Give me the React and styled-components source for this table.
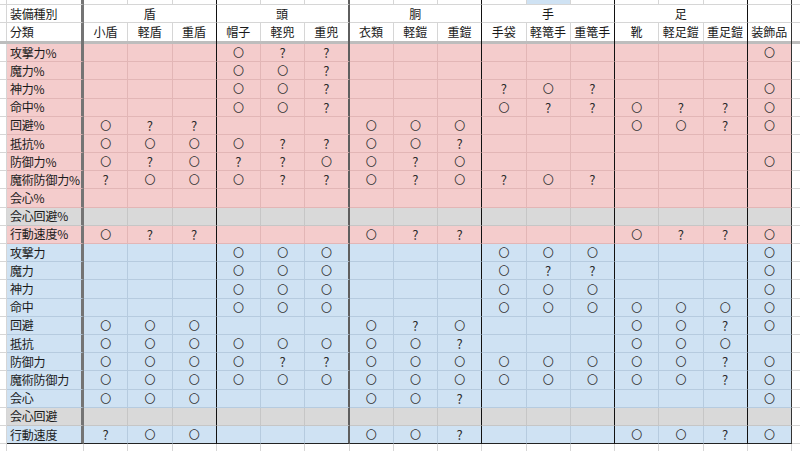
import React from "react";
import styled, { createGlobalStyle } from "styled-components";

const GlobalStyle = createGlobalStyle`
  html, body {
    margin: 0;
    padding: 0;
    background: #ffffff;
  }
  body {
    font-family: "Noto Sans CJK JP", "Noto Sans", sans-serif;
    color: #1a1a1a;
  }
`;

const COLS = [
  "小盾", "軽盾", "重盾",
  "帽子", "軽兜", "重兜",
  "衣類", "軽鎧", "重鎧",
  "手袋", "軽篭手", "重篭手",
  "靴", "軽足鎧", "重足鎧",
  "装飾品",
];

const GROUPS = [
  { name: "盾", span: 3, end: 2 },
  { name: "頭", span: 3, end: 5 },
  { name: "胴", span: 3, end: 8 },
  { name: "手", span: 3, end: 11 },
  { name: "足", span: 3, end: 14 },
  { name: "", span: 1, end: 15 },
];

// o = 〇, ? = ?, . = empty
const ROWS = [
  { label: "攻撃力%", tone: "pink", marks: "...o??.........o" },
  { label: "魔力%", tone: "pink", marks: "...oo?.........." },
  { label: "神力%", tone: "pink", marks: "...oo?...?o?...o" },
  { label: "命中%", tone: "pink", marks: "...oo?...o??o??o" },
  { label: "回避%", tone: "pink", marks: "o??...ooo...oo?o" },
  { label: "抵抗%", tone: "pink", marks: "oooo??oo?......." },
  { label: "防御力%", tone: "pink", marks: "o?o??oo?o......o" },
  { label: "魔術防御力%", tone: "pink", marks: "?ooo??o?o?o?...." },
  { label: "会心%", tone: "pink", marks: "................" },
  { label: "会心回避%", tone: "gray", marks: "................" },
  { label: "行動速度%", tone: "pink", marks: "o??...o??...o??o" },
  { label: "攻撃力", tone: "blue", marks: "...ooo...ooo...o" },
  { label: "魔力", tone: "blue", marks: "...ooo...o??...o" },
  { label: "神力", tone: "blue", marks: "...ooo...ooo...o" },
  { label: "命中", tone: "blue", marks: "...ooo...ooooooo" },
  { label: "回避", tone: "blue", marks: "ooo...o?o...oo?o" },
  { label: "抵抗", tone: "blue", marks: "oooooooo?...ooo." },
  { label: "防御力", tone: "blue", marks: "oooo??oooooooo?o" },
  { label: "魔術防御力", tone: "blue", marks: "oooooooooooooo?o" },
  { label: "会心", tone: "blue", marks: "ooo...oo?......o" },
  { label: "会心回避", tone: "gray", marks: "................" },
  { label: "行動速度", tone: "blue", marks: "?oo...oo?...oo?o" },
];

const TONES = {
  white: { bg: "#ffffff", line: "#d6d6d6" },
  pink: { bg: "#f4cccc", line: "#e2b6b6" },
  blue: { bg: "#cfe2f3", line: "#b6cbdf" },
  gray: { bg: "#d9d9d9", line: "#c6c6c6" },
};

const edgeFor = (i, line) => {
  if (i === 5) return "2px solid #5e5e5e";
  if (i === 2 || i === 8 || i === 11 || i === 14) return "1px solid #111";
  if (i === 15) return "1px solid #333";
  return `1px solid ${line}`;
};

const Sheet = styled.div`
  display: grid;
  width: 800px;
  height: 451px;
  overflow: hidden;
  grid-template-columns: 7px 77px repeat(16, 44.25px) 1fr;
  grid-template-rows: 5px 18.2px 18.2px 2.6px repeat(22, 18.2px) 1fr;
`;

const Cell = styled.div`
  box-sizing: border-box;
  display: flex;
  align-items: center;
  justify-content: ${(p) => (p.$left ? "flex-start" : "center")};
  padding-left: ${(p) => (p.$left ? "3px" : "0")};
  grid-column: ${(p) => (p.$span ? `span ${p.$span}` : "auto")};
  background: ${(p) => p.$bg};
  border-right: ${(p) => p.$edge || "none"};
  border-bottom: ${(p) => p.$bottom || "none"};
  font-size: 12px;
  letter-spacing: ${(p) => (p.$left ? "-0.2px" : "0")};
  line-height: 1;
  white-space: nowrap;
  overflow: hidden;
`;

const Circle = styled.span`
  font-size: 11px;
  color: #333;
`;

const Question = styled.span`
  font-size: 13px;
  color: #2b2b2b;
`;

const LABEL_EDGE = "3px solid #747474";

function Mark({ ch }) {
  if (ch === "o") return <Circle>〇</Circle>;
  if (ch === "?") return <Question>?</Question>;
  return null;
}

function TopStrip() {
  const t = TONES.white;
  const bottom = `1px solid ${t.line}`;
  return (
    <>
      <Cell $bg={t.bg} $edge={`1px solid ${t.line}`} $bottom={bottom} />
      <Cell $bg={t.bg} $edge={LABEL_EDGE} $bottom={bottom} />
      {COLS.map((c, i) => (
        <Cell
          key={c}
          $bg={i === 10 ? TONES.blue.bg : t.bg}
          $edge={edgeFor(i, t.line)}
          $bottom={bottom}
        />
      ))}
      <Cell $bg={t.bg} $bottom={bottom} />
    </>
  );
}

function GroupHeader() {
  const t = TONES.white;
  const bottom = `1px solid ${t.line}`;
  return (
    <>
      <Cell $bg={t.bg} $edge={`1px solid ${t.line}`} $bottom={bottom} />
      <Cell $left $bg={t.bg} $edge={LABEL_EDGE} $bottom={bottom}>
        装備種別
      </Cell>
      {GROUPS.map((g) => (
        <Cell
          key={g.end}
          $span={g.span}
          $bg={t.bg}
          $edge={edgeFor(g.end, t.line)}
          $bottom={bottom}
        >
          {g.name}
        </Cell>
      ))}
      <Cell $bg={t.bg} $bottom={bottom} />
    </>
  );
}

function ColumnHeader() {
  const t = TONES.white;
  return (
    <>
      <Cell $bg={t.bg} $edge={`1px solid ${t.line}`} />
      <Cell $left $bg={t.bg} $edge={LABEL_EDGE}>
        分類
      </Cell>
      {COLS.map((c, i) => (
        <Cell key={c} $bg={t.bg} $edge={edgeFor(i, t.line)}>
          {c}
        </Cell>
      ))}
      <Cell $bg={t.bg} />
    </>
  );
}

function Divider() {
  const bar = "#bdbdbd";
  return (
    <>
      <Cell $bg={bar} />
      <Cell $bg={bar} $edge={LABEL_EDGE} />
      {COLS.map((c, i) => (
        <Cell key={c} $bg={bar} $edge={edgeFor(i, bar)} />
      ))}
      <Cell $bg={bar} />
    </>
  );
}

function DataRow({ row, last }) {
  const t = TONES[row.tone];
  const w = TONES.white;
  const bottom = last ? "1px solid #222" : `1px solid ${t.line}`;
  return (
    <>
      <Cell $bg={w.bg} $edge={`1px solid ${w.line}`} $bottom={`1px solid ${w.line}`} />
      <Cell $left $bg={t.bg} $edge={LABEL_EDGE} $bottom={bottom}>
        {row.label}
      </Cell>
      {COLS.map((c, i) => (
        <Cell key={c} $bg={t.bg} $edge={edgeFor(i, t.line)} $bottom={bottom}>
          <Mark ch={row.marks[i]} />
        </Cell>
      ))}
      <Cell $bg={w.bg} $bottom={`1px solid ${w.line}`} />
    </>
  );
}

function Filler() {
  const t = TONES.white;
  return (
    <>
      <Cell $bg={t.bg} $edge={`1px solid ${t.line}`} />
      <Cell $bg={t.bg} $edge={`1px solid ${t.line}`} />
      {COLS.map((c) => (
        <Cell key={c} $bg={t.bg} $edge={`1px solid ${t.line}`} />
      ))}
      <Cell $bg={t.bg} />
    </>
  );
}

export default function App() {
  return (
    <>
      <GlobalStyle />
      <Sheet>
        <TopStrip />
        <GroupHeader />
        <ColumnHeader />
        <Divider />
        {ROWS.map((row, i) => (
          <DataRow key={row.label} row={row} last={i === ROWS.length - 1} />
        ))}
        <Filler />
      </Sheet>
    </>
  );
}
